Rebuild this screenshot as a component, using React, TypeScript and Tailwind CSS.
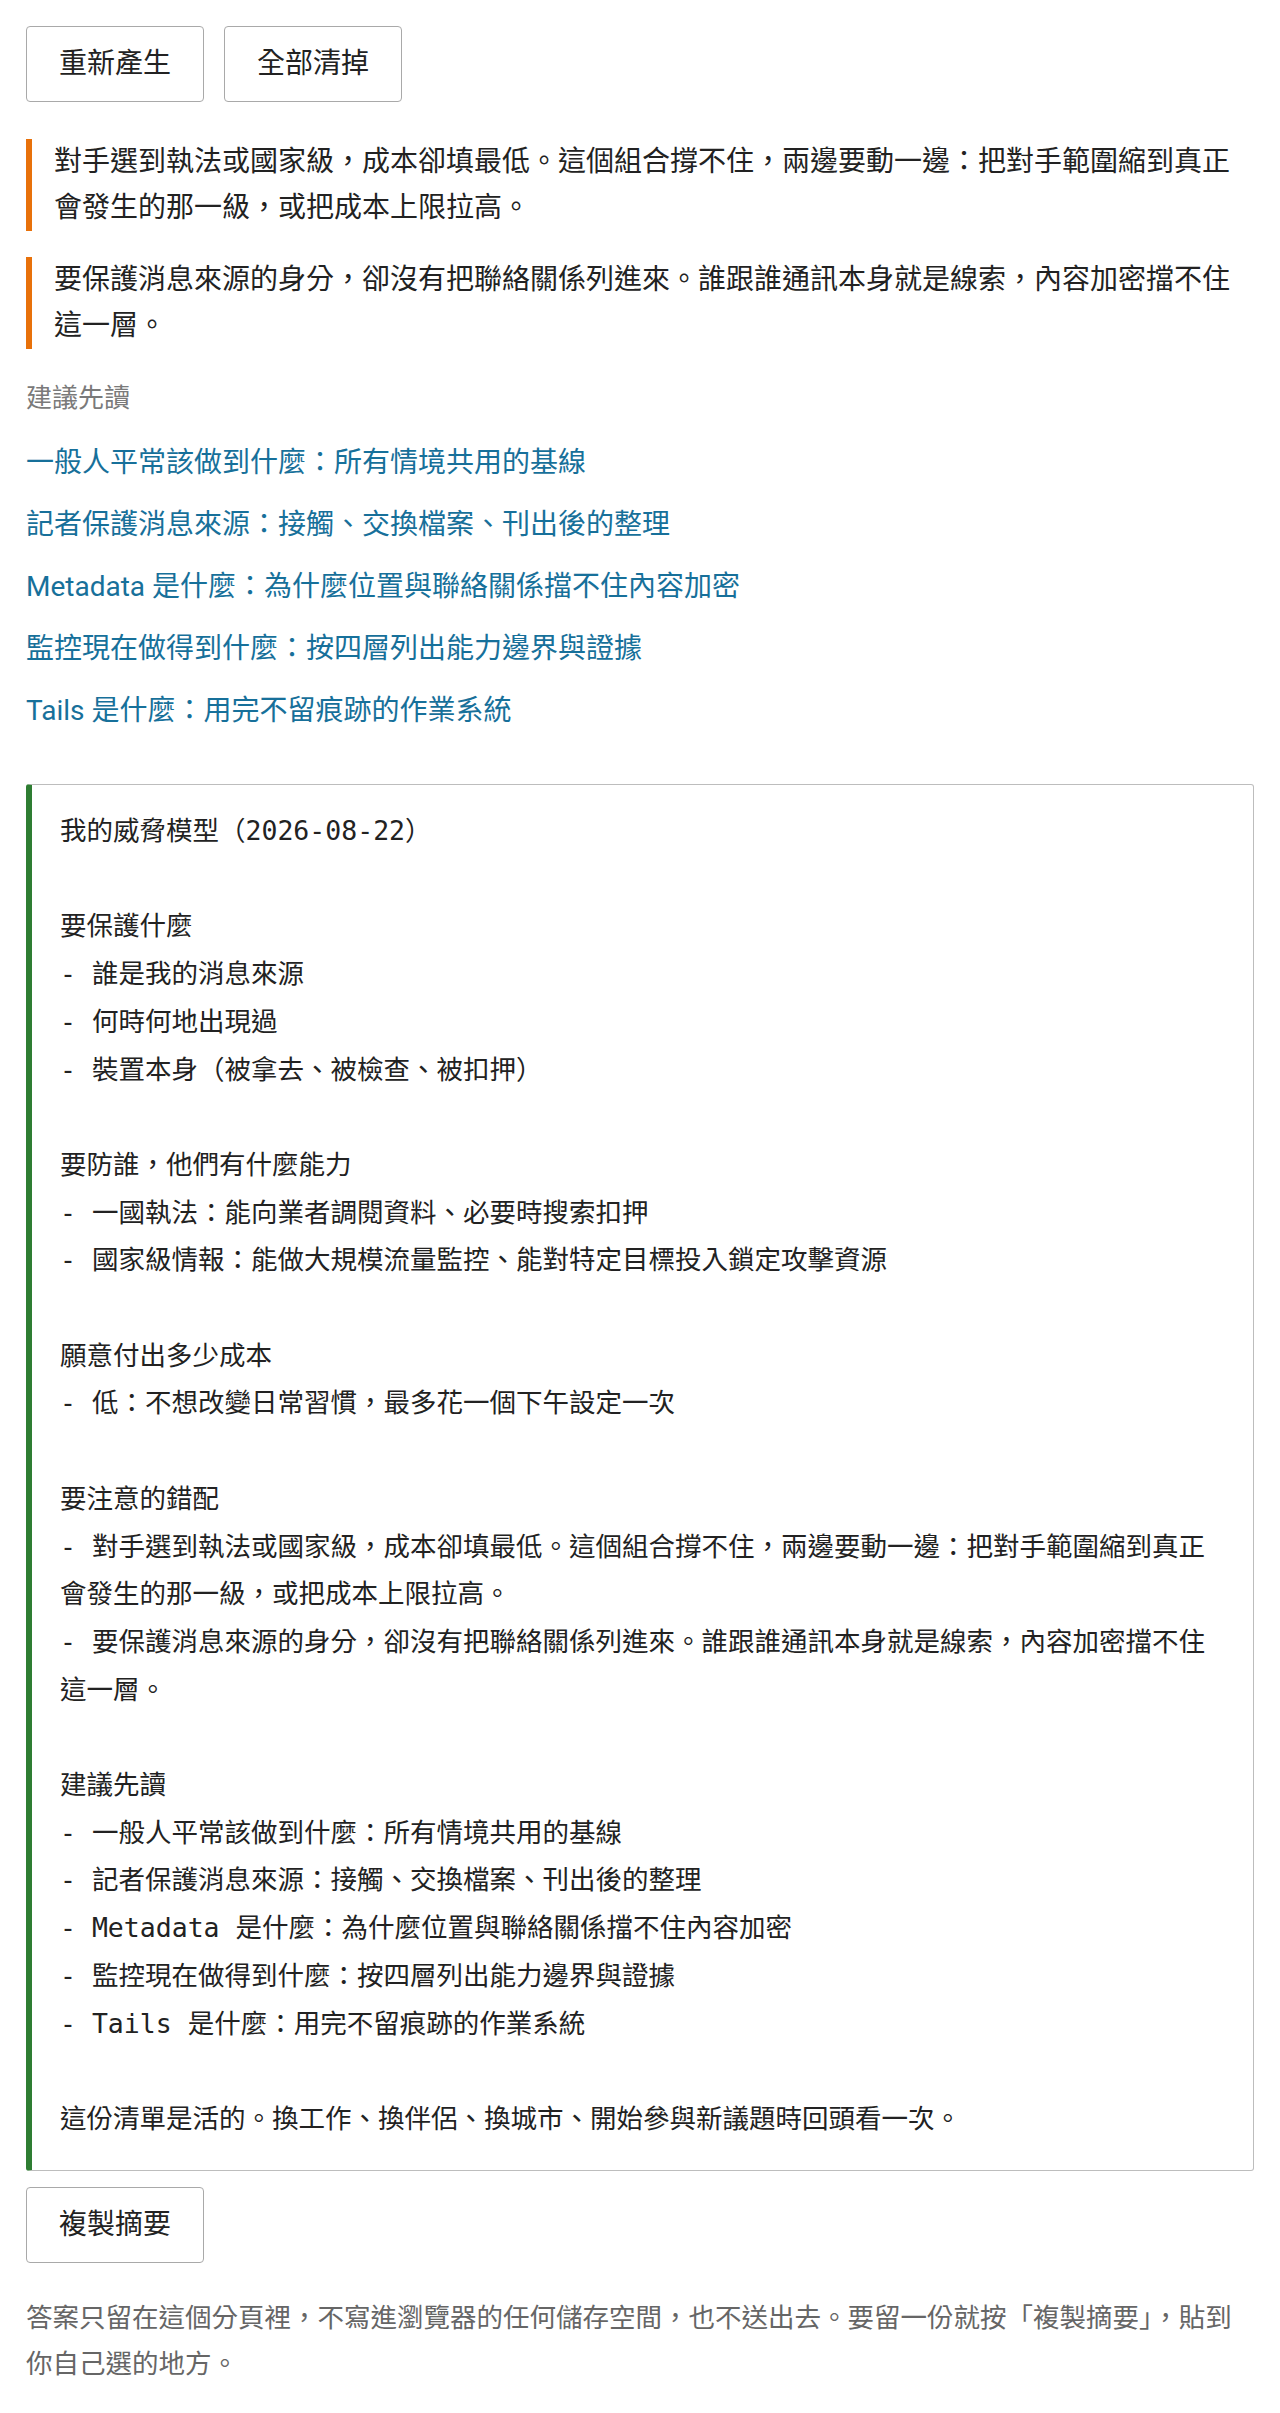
const summary = `我的威脅模型（2026-08-22）

要保護什麼
- 誰是我的消息來源
- 何時何地出現過
- 裝置本身（被拿去、被檢查、被扣押）

要防誰，他們有什麼能力
- 一國執法：能向業者調閱資料、必要時搜索扣押
- 國家級情報：能做大規模流量監控、能對特定目標投入鎖定攻擊資源

願意付出多少成本
- 低：不想改變日常習慣，最多花一個下午設定一次

要注意的錯配
- 對手選到執法或國家級，成本卻填最低。這個組合撐不住，兩邊要動一邊：把對手範圍縮到真正會發生的那一級，或把成本上限拉高。
- 要保護消息來源的身分，卻沒有把聯絡關係列進來。誰跟誰通訊本身就是線索，內容加密擋不住這一層。

建議先讀
- 一般人平常該做到什麼：所有情境共用的基線
- 記者保護消息來源：接觸、交換檔案、刊出後的整理
- Metadata 是什麼：為什麼位置與聯絡關係擋不住內容加密
- 監控現在做得到什麼：按四層列出能力邊界與證據
- Tails 是什麼：用完不留痕跡的作業系統

這份清單是活的。換工作、換伴侶、換城市、開始參與新議題時回頭看一次。`

const warnings = [
  '對手選到執法或國家級，成本卻填最低。這個組合撐不住，兩邊要動一邊：把對手範圍縮到真正會發生的那一級，或把成本上限拉高。',
  '要保護消息來源的身分，卻沒有把聯絡關係列進來。誰跟誰通訊本身就是線索，內容加密擋不住這一層。',
]

const readings = [
  '一般人平常該做到什麼：所有情境共用的基線',
  '記者保護消息來源：接觸、交換檔案、刊出後的整理',
  'Metadata 是什麼：為什麼位置與聯絡關係擋不住內容加密',
  '監控現在做得到什麼：按四層列出能力邊界與證據',
  'Tails 是什麼：用完不留痕跡的作業系統',
]

function Btn({ children }: { children: React.ReactNode }) {
  return (
    <button className="h-[76px] px-[32px] bg-white border border-[#a9a9a9] rounded-[4px] text-[28px] leading-[40px] text-[#222]">
      {children}
    </button>
  )
}

export default function App() {
  return (
    <div className="bg-white min-h-screen px-[26px] pt-[26px] pb-[40px] text-[#222] font-['Roboto','Noto_Sans_CJK_TC',sans-serif]">
      {/* actions */}
      <div className="flex gap-[20px]">
        <Btn>重新產生</Btn>
        <Btn>全部清掉</Btn>
      </div>

      {/* mismatch warnings */}
      <div className="mt-[37px] flex flex-col gap-[26px]">
        {warnings.map(w => (
          <p key={w} className="border-l-[6px] border-[#e8710a] pl-[22px] text-[28px] leading-[46px]">
            {w}
          </p>
        ))}
      </div>

      {/* suggested reading */}
      <p className="mt-[29px] text-[26px] leading-[40px] text-[#7a7a7a]">建議先讀</p>
      <ul className="mt-[22px] flex flex-col gap-[16px]">
        {readings.map(r => (
          <li key={r}>
            <a href="#" className="text-[28px] leading-[46px] text-[#17709a]">{r}</a>
          </li>
        ))}
      </ul>

      {/* summary box */}
      <pre className="mt-[50px] bg-white border-[1.5px] border-[#bdbdbd] border-l-[6px] border-l-[#2e7d32] rounded-[3px] pl-[28px] pr-[28px] pt-[22px] pb-[27px] whitespace-pre-wrap text-[26.5px] leading-[47.7px] text-[#222] font-['DejaVu_Sans_Mono','Noto_Sans_CJK_TC',monospace]">
        {summary}
      </pre>

      <div className="mt-[16px]">
        <Btn>複製摘要</Btn>
      </div>

      <p className="mt-[32px] text-[26.5px] leading-[46px] text-[#666]">
        答案只留在這個分頁裡，不寫進瀏覽器的任何儲存空間，也不送出去。要留一份就按「複製摘要」，貼到你自己選的地方。
      </p>
    </div>
  )
}
